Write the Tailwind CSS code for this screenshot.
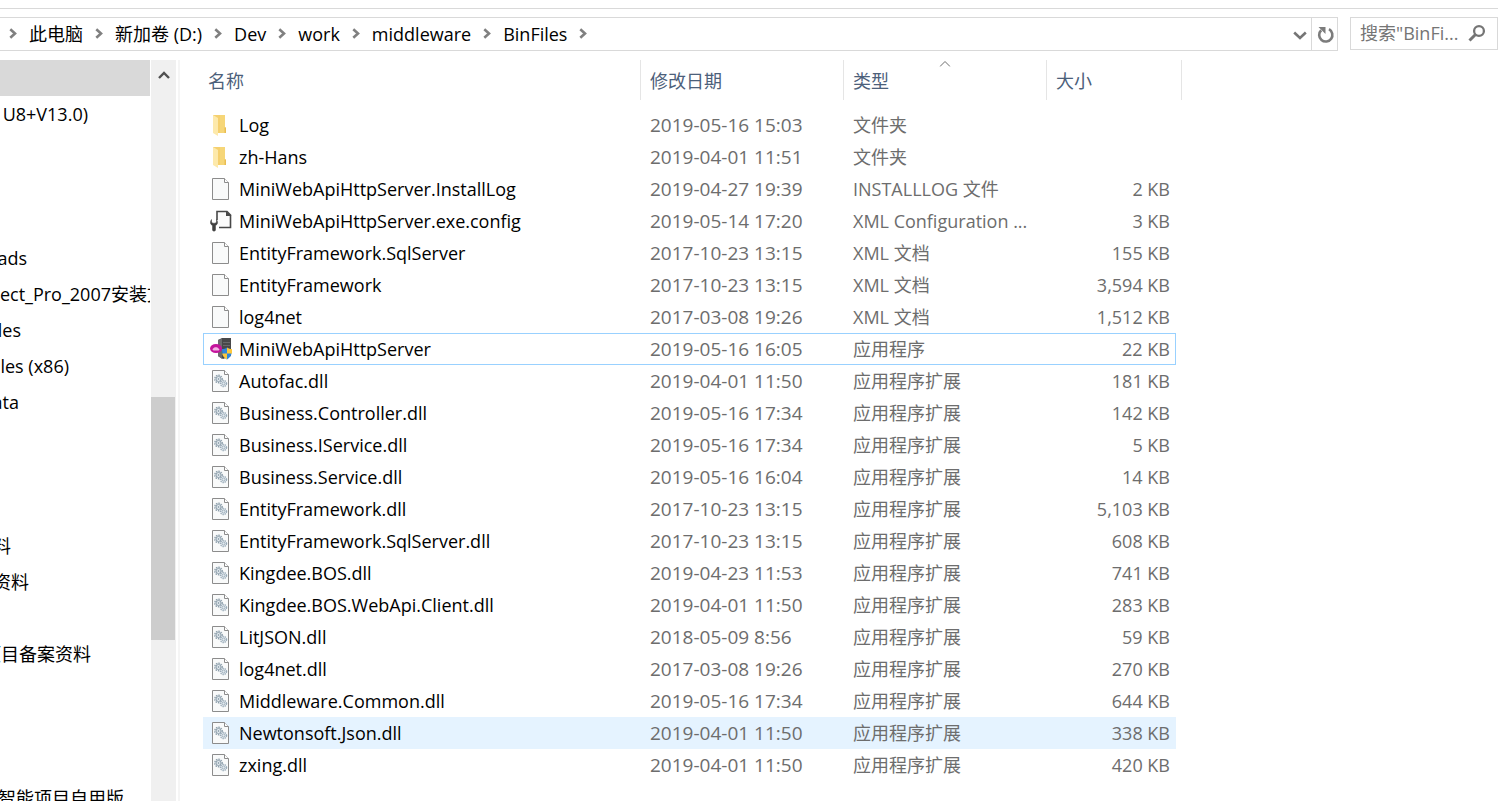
<!DOCTYPE html>
<html lang="zh-CN">
<head>
<meta charset="utf-8">
<title>BinFiles</title>
<script src="https://cdn.jsdelivr.net/npm/@tailwindcss/browser@4"></script>
</head>
<body class="bg-white">
<svg class="hidden" aria-hidden="true">
  <symbol id="i-crumb" viewBox="0 0 8 11"><path d="M1.3 1.2 6 5.5 1.3 9.8" fill="none" stroke="#808080" stroke-width="2.6"/></symbol>
  <symbol id="i-folder" viewBox="0 0 22 22">
    <path d="M3 1h12v12l1 1v5H4L3 18z" fill="#f5d06f"/>
    <path d="M10 1h5v18h-5z" fill="#f6d678"/>
    <path d="M14.500 13.500h1.500V19h-1.500z" fill="#e9bd52"/>
    <path d="M3 1l5 3v18l-5-3z" fill="#fde9ab"/>
  </symbol>
  <symbol id="i-file" viewBox="0 0 22 22">
    <path d="M2.500.5h12l4 4v17h-16z" fill="#f9fafa" stroke="#8c8c8c"/>
    <path d="M14.500.5v4h4" fill="#fff" stroke="#8c8c8c"/>
  </symbol>
  <symbol id="i-config" viewBox="0 0 22 22">
    <path d="M7 10V1.500h10L20.500 5v12.500H9" fill="#fbfbfb" stroke="#484848" stroke-width="1.600"/>
    <path d="M16 1v5h5.500z" fill="#484848"/>
    <path d="M1.500 9.500C-.3 12 .3 14.500 2.500 15.500V20c0 1.500 3 1.500 3 0v-4.500C7.700 14.500 8.300 12 6.500 9.500V12L5.200 13.200H2.800L1.500 12z" fill="#404040" stroke="#404040" stroke-width=".5"/>
  </symbol>
  <symbol id="i-app" viewBox="0 0 22 22">
    <path d="M8 2 12 0h9v18l-8 3-5-3z" fill="#48484a"/>
    <path d="M8 2 12 .8V21l-4-3z" fill="#6b6b6e"/>
    <path d="M13 4.500h7M13 7.500h7" stroke="#68686b"/>
    <ellipse cx="6" cy="10.500" rx="6" ry="4.500" fill="#c4149c"/>
    <path d="M3 10.800c.4-2 4.600-2.300 5.500-.3 1.300.2 1.200 2-.2 2H4c-1.500 0-1.800-1.500-1-1.700z" fill="#f3b5e4"/>
    <path d="M17 9.500c1.500 1.200 3 1.500 5 1.500 0 5-1 8-5 10.500-4-2.500-5-5.500-5-10.500 2 0 3.500-.3 5-1.500z" fill="#2f86dc"/>
    <path d="M17 9.500c1.500 1.200 3 1.500 5 1.500v4.500h-5zM12.200 15.500H17v6c-2.800-1.700-4.400-3.500-4.800-6z" fill="#fdc83c"/>
  </symbol>
  <symbol id="i-dll" viewBox="0 0 22 22">
    <path d="M2.500.5h12l4 4v17h-16z" fill="#f9fafa" stroke="#8c8c8c"/>
    <path d="M14.500.5v4h4" fill="#fff" stroke="#8c8c8c"/>
    <circle cx="8.500" cy="9" r="3.700" fill="none" stroke="#8c9eab" stroke-width="1.400" stroke-dasharray="1.500 .9"/>
    <circle cx="8.500" cy="9" r="2.500" fill="#e3eaef" stroke="#8c9eab"/>
    <circle cx="8.500" cy="9" r=".8" fill="#708696"/>
    <circle cx="13.500" cy="13.500" r="3.100" fill="#eef2f5" stroke="#9aacba" stroke-width="1.300" stroke-dasharray="1.400 .8"/>
    <circle cx="13.500" cy="13.500" r="1.600" fill="#e3eaef" stroke="#9aacba"/>
  </symbol>
</svg>

<div class="flex h-screen flex-col overflow-hidden bg-white pt-2 text-[18px] leading-6 text-black font-['Open_Sans','Noto_Sans_CJK_SC',sans-serif]">
  <header class="flex items-start gap-3 border-t border-[#d9d9d9] pt-2">
    <div class="flex h-[34px] flex-1 border border-l-0 border-[#d9d9d9]">
      <nav id="crumbs" aria-label="路径" class="flex flex-1 items-center gap-3 pb-px pl-[9px]"></nav>
      <button aria-label="以前的位置" class="flex w-[22px] items-center justify-center pt-0.5"><svg class="h-[9px] w-[14px]" viewBox="0 0 14 9"><path d="M1.200 1.500 7 7l5.800-5.500" fill="none" stroke="#757575" stroke-width="2.600"/></svg></button>
      <button aria-label="刷新" class="flex w-[26px] items-center justify-center border-l border-[#d9d9d9] pt-0.5 pl-0.5"><svg class="h-[18px] w-[18px]" viewBox="0 0 18 18"><path d="M4.200 4.200A6.600 6.600 0 1 0 12 3.200" fill="none" stroke="#7c7c7c" stroke-width="2.600"/><path d="M1.500 1h7v7z" fill="#7c7c7c"/></svg></button>
    </div>
    <form class="flex h-[33px] w-[148px] items-center border border-[#d9d9d9] pb-px pl-[9px]">
      <input aria-label="搜索" placeholder='搜索"BinFi...' class="w-[108px] min-w-0 outline-none placeholder:text-[#757575]">
      <button type="button" aria-label="搜索" class="flex"><svg class="h-[18px] w-[18px]" viewBox="0 0 18 18"><circle cx="11" cy="7" r="4.900" fill="none" stroke="#757575" stroke-width="2.300"/><path d="M7.500 10.500 1.500 16.500" stroke="#757575" stroke-width="3"/></svg></button>
    </form>
  </header>

  <div class="mt-[9px] flex min-h-0 flex-1">
    <nav id="tree" aria-label="导航窗格" class="w-[150px] shrink-0 overflow-hidden whitespace-nowrap"></nav>
    <div class="ml-px flex w-[25px] shrink-0 flex-col bg-[#f0f0f0]">
      <button aria-label="向上滚动" class="flex h-[30px] items-center justify-center"><svg class="h-2 w-3" viewBox="0 0 12 8"><path d="M1 7 6 2l5 5" fill="none" stroke="#505050" stroke-width="2.400"/></svg></button>
      <div class="mt-[307px] h-[243px] w-6 bg-[#cdcdcd]"></div>
    </div>
    <main class="ml-[2px] flex-1 border-l-2 border-[#f5f5f5] pl-[23px]">
      <table class="w-[979px] table-fixed border-separate border-spacing-0 whitespace-nowrap">
        <colgroup><col class="w-[437px]"><col class="w-[203px]"><col class="w-[203px]"><col class="w-[130px]"><col class="w-[6px]"></colgroup>
        <thead>
          <tr class="h-10 text-left text-[#4c607a]">
            <th class="p-0 pt-0.5 pl-[5px] font-normal">名称</th>
            <th class="border-l border-[#e5e5e5] p-0 pt-0.5 pl-[9px] font-normal">修改日期</th>
            <th class="relative border-l border-[#e5e5e5] p-0 pt-0.5 pl-[9px] font-normal">类型<svg class="absolute top-[1px] left-1/2 h-[6px] w-[11px] -translate-x-1/2" viewBox="0 0 11 6"><path d="M.5 5.500l5-5 5 5" fill="none" stroke="#6d6d6d"/></svg></th>
            <th class="border-l border-[#e5e5e5] p-0 pt-0.5 pl-[9px] font-normal">大小</th>
            <td class="border-r border-[#e5e5e5] p-0"></td>
          </tr>
          <tr class="h-[9px]"><td colspan="5" class="p-0"></td></tr>
        </thead>
        <tbody id="files"></tbody>
      </table>
    </main>
  </div>
</div>

<script>
const crumb = '<svg class="h-[11px] w-2 shrink-0"><use href="#i-crumb"/></svg>';
document.getElementById('crumbs').innerHTML = crumb +
  ['此电脑', '新加卷 (D:)', 'Dev', 'work', 'middleware', 'BinFiles'].map(t => `<button>${t}</button>${crumb}`).join('');

// Tree labels are scrolled to the left; each entry holds its label and the x where it ends.
const tree = [['', 0], ['U8+V13.0)', 88], 0, 0, 0, ['Downloads', 27], ['Project_Pro_2007安装文', 165], ['Program Files', 21],
  ['Program Files (x86)', 69], ['ProgramData', 19], 0, 0, 0, ['资料', 11], ['资料', 29], 0, ['项目备案资料', 91], 0, 0, 0, ['智能项目自用版', 124]];
document.getElementById('tree').innerHTML = tree.map((e, i) =>
  i === 0 ? '<a href="#" aria-label="当前文件夹" class="block h-9 bg-[#d9d9d9]"></a>'
  : e ? `<a href="#" class="flex h-9 items-center justify-end" style="width:${e[1]}px">${e[0]}</a>`
  : '<div class="h-9"></div>').join('');

const X = '应用程序扩展';
const files = [
  ['folder', 'Log', '2019-05-16 15:03', '文件夹', ''],
  ['folder', 'zh-Hans', '2019-04-01 11:51', '文件夹', ''],
  ['file', 'MiniWebApiHttpServer.InstallLog', '2019-04-27 19:39', 'INSTALLLOG 文件', '2 KB'],
  ['config', 'MiniWebApiHttpServer.exe.config', '2019-05-14 17:20', 'XML Configuration ...', '3 KB'],
  ['file', 'EntityFramework.SqlServer', '2017-10-23 13:15', 'XML 文档', '155 KB'],
  ['file', 'EntityFramework', '2017-10-23 13:15', 'XML 文档', '3,594 KB'],
  ['file', 'log4net', '2017-03-08 19:26', 'XML 文档', '1,512 KB'],
  ['app', 'MiniWebApiHttpServer', '2019-05-16 16:05', '应用程序', '22 KB'],
  ['dll', 'Autofac.dll', '2019-04-01 11:50', X, '181 KB'],
  ['dll', 'Business.Controller.dll', '2019-05-16 17:34', X, '142 KB'],
  ['dll', 'Business.IService.dll', '2019-05-16 17:34', X, '5 KB'],
  ['dll', 'Business.Service.dll', '2019-05-16 16:04', X, '14 KB'],
  ['dll', 'EntityFramework.dll', '2017-10-23 13:15', X, '5,103 KB'],
  ['dll', 'EntityFramework.SqlServer.dll', '2017-10-23 13:15', X, '608 KB'],
  ['dll', 'Kingdee.BOS.dll', '2019-04-23 11:53', X, '741 KB'],
  ['dll', 'Kingdee.BOS.WebApi.Client.dll', '2019-04-01 11:50', X, '283 KB'],
  ['dll', 'LitJSON.dll', '2018-05-09 8:56', X, '59 KB'],
  ['dll', 'log4net.dll', '2017-03-08 19:26', X, '270 KB'],
  ['dll', 'Middleware.Common.dll', '2019-05-16 17:34', X, '644 KB'],
  ['dll', 'Newtonsoft.Json.dll', '2019-04-01 11:50', X, '338 KB'],
  ['dll', 'zxing.dll', '2019-04-01 11:50', X, '420 KB']
];
document.getElementById('files').innerHTML = files.map(([icon, name, date, type, size]) => {
  const focused = icon === 'app';
  const row = name === 'Newtonsoft.Json.dll' ? 'h-8 text-[#6d6d6d] bg-[#e5f3ff]' : 'h-8 text-[#6d6d6d]';
  const edge = focused ? 'border-y border-[#99d1ff]' : '';
  const first = focused ? 'border-l pl-[6px]' : 'pl-[7px]';
  const last = focused ? 'border-r pr-[5px]' : 'pr-[6px]';
  return `<tr class="${row}">
    <td class="py-0 pr-0 text-black ${first} ${edge}"><div class="flex items-center gap-[7px]"><svg class="h-[22px] w-[22px] shrink-0"><use href="#i-${icon}"/></svg>${name}</div></td>
    <td class="p-0 pl-[10px] text-[19px] ${edge}">${date}</td>
    <td class="p-0 pl-[10px] ${edge}">${type}</td>
    <td class="py-0 pl-0 text-right ${last} ${edge}">${size}</td>
  </tr>`;
}).join('');
</script>
</body>
</html>
